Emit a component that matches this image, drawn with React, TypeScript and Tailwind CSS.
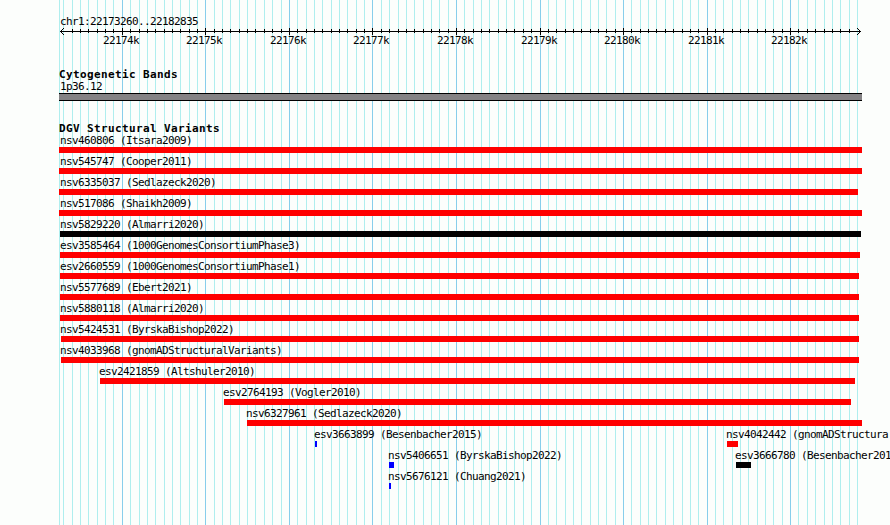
import React from 'react';

type Variant = {
  name: string;
  start: number;
  end: number;
  color: string;
};

const LEFT = 59;
const RIGHT = 862;

const RED = 'bg-[#ff0000]';
const BLACK = 'bg-[#000000]';
const BLUE = 'bg-[#0000ff]';

// one entry per lane, start/end in track pixels
const lanes: Variant[][] = [
  [{ name: 'nsv460806 (Itsara2009)', start: 59, end: 862, color: RED }],
  [{ name: 'nsv545747 (Cooper2011)', start: 59, end: 862, color: RED }],
  [{ name: 'nsv6335037 (Sedlazeck2020)', start: 59, end: 858, color: RED }],
  [{ name: 'nsv517086 (Shaikh2009)', start: 59, end: 862, color: RED }],
  [{ name: 'nsv5829220 (Almarri2020)', start: 60, end: 861, color: BLACK }],
  [{ name: 'esv3585464 (1000GenomesConsortiumPhase3)', start: 60, end: 860, color: RED }],
  [{ name: 'esv2660559 (1000GenomesConsortiumPhase1)', start: 60, end: 859, color: RED }],
  [{ name: 'nsv5577689 (Ebert2021)', start: 60, end: 859, color: RED }],
  [{ name: 'nsv5880118 (Almarri2020)', start: 60, end: 859, color: RED }],
  [{ name: 'nsv5424531 (ByrskaBishop2022)', start: 61, end: 859, color: RED }],
  [{ name: 'nsv4033968 (gnomADStructuralVariants)', start: 61, end: 859, color: RED }],
  [{ name: 'esv2421859 (Altshuler2010)', start: 100, end: 855, color: RED }],
  [{ name: 'esv2764193 (Vogler2010)', start: 224, end: 851, color: RED }],
  [{ name: 'nsv6327961 (Sedlazeck2020)', start: 247, end: 862, color: RED }],
  [
    { name: 'esv3663899 (Besenbacher2015)', start: 315, end: 317, color: BLUE },
    { name: 'nsv4042442 (gnomADStructura', start: 727, end: 738, color: RED },
  ],
  [
    { name: 'nsv5406651 (ByrskaBishop2022)', start: 389, end: 394, color: BLUE },
    { name: 'esv3666780 (Besenbacher201', start: 736, end: 751, color: BLACK },
  ],
  [{ name: 'nsv5676121 (Chuang2021)', start: 389, end: 391, color: BLUE }],
];

// a line every 100 bp, k = 0 is 22174k
const ticks = Array.from({ length: 96 }, (_, i) => {
  const k = i - 7;
  return { k, x: Math.round(121.82 + 8.354 * k), major: k % 10 === 0 };
});

function GridLines() {
  return (
    <svg className="absolute inset-0" width="890" height="525" shapeRendering="crispEdges">
      <rect x={LEFT} y="0" width="1" height="525" fill="#afeeee" />
      {ticks.map(t => (
        <rect key={t.k} x={t.x} y="0" width="1" height="525" fill={t.major ? '#87ceeb' : '#afeeee'} />
      ))}
    </svg>
  );
}

function Ruler() {
  return (
    <svg className="block" width="890" height="22" shapeRendering="crispEdges">
      <rect x="60" y="5" width="801" height="1" />
      <path d="M61 4h1v1h-1z M62 3h1v1h-1z M63 2h1v1h-1z M61 6h1v1h-1z M62 7h1v1h-1z M63 8h1v1h-1z" />
      <path d="M859 4h1v1h-1z M858 3h1v1h-1z M857 2h1v1h-1z M859 6h1v1h-1z M858 7h1v1h-1z M857 8h1v1h-1z" />
      {/* the first and last ticks are hidden by the arrow heads */}
      {ticks.slice(1, -1).map(t => (
        <rect key={t.k} x={t.x} y={t.major ? 2 : 3} width="1" height={t.major ? 7 : 4} />
      ))}
      {ticks.filter(t => t.major).map(t => (
        <text key={t.k} x={t.x - 19} y="18">
          {`${22174 + t.k / 10}k`}
        </text>
      ))}
    </svg>
  );
}

function TrackTitle({ children }: { children: React.ReactNode }) {
  return (
    <h2 className="h-3 pl-[59px] text-[11px] leading-[14px] font-bold tracking-[0.378px]">{children}</h2>
  );
}

function Feature({ variant }: { variant: Variant }) {
  const labelX = Math.max(60, variant.start - 1);
  return (
    <div className="col-start-1 row-start-1">
      <div className="h-[13px] leading-[13px]" style={{ marginLeft: labelX }}>
        {variant.name}
      </div>
      <div
        className={`h-1.5 ${variant.color}`}
        style={{ marginLeft: variant.start, width: variant.end - variant.start }}
      />
    </div>
  );
}

export default function App() {
  return (
    <div className="relative h-[525px] w-[890px] overflow-hidden bg-[#fcfefc] font-['DejaVu_Sans_Mono','Liberation_Mono',monospace] text-[11px] tracking-[-0.622px] whitespace-pre text-black">
      <GridLines />
      <div className="relative flex flex-col">
        <div className="mt-[15px] h-[11px] pl-[60px] leading-[14px]">chr1:22173260..22182835</div>
        <Ruler />

        <section className="mt-5">
          <TrackTitle>Cytogenetic Bands</TrackTitle>
          <div className="h-[13px] pl-[60px] leading-[13px]">1p36.12</div>
          <div
            className="h-2 border-y border-black bg-[#848284]"
            style={{ marginLeft: LEFT, width: RIGHT - LEFT }}
          />
        </section>

        <section className="mt-[21px]">
          <TrackTitle>DGV Structural Variants</TrackTitle>
          {lanes.map((lane, i) => (
            <div key={i} className="grid h-[21px] grid-cols-[890px]">
              {lane.map(v => (
                <Feature key={v.name} variant={v} />
              ))}
            </div>
          ))}
        </section>
      </div>
    </div>
  );
}
